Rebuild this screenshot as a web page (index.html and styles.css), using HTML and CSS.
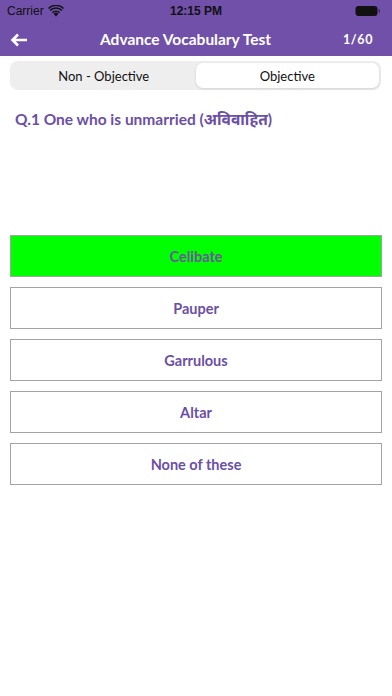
FILE: index.html
```html
<!DOCTYPE html>
<html>
<head>
<meta charset="utf-8">
<link rel="stylesheet" href="styles.css">
</head>
<body>
<div class="app">
  <header class="top">
    <div class="status">
      <div class="status-left">
        <span class="carrier">Carrier</span>
        <svg class="wifi" width="16" height="12" viewBox="0 0 16 12">
          <path d="M8 11.5 L5.6 8.8 A3.4 3.4 0 0 1 10.4 8.8 Z" fill="#111"/>
          <path d="M3.9 7.1 A5.8 5.8 0 0 1 12.1 7.1 L11 8.2 A4.3 4.3 0 0 0 5 8.2 Z" fill="#111"/>
          <path d="M1.6 4.8 A9 9 0 0 1 14.4 4.8 L13.3 5.9 A7.5 7.5 0 0 0 2.7 5.9 Z" fill="#111"/>
          <path d="M0 3 A11.3 11.3 0 0 1 16 3 L15 4 A9.9 9.9 0 0 0 1 4 Z" fill="#111"/>
        </svg>
      </div>
      <span class="time">12:15 PM</span>
      <div class="status-right">
        <svg width="26" height="12" viewBox="0 0 26 12">
          <rect x="0.5" y="1" width="22" height="10" rx="3" fill="#111"/>
          <rect x="23.5" y="4" width="1.5" height="4" rx="0.7" fill="#111" opacity="0.5"/>
        </svg>
      </div>
    </div>
    <div class="nav">
      <svg class="back" width="18" height="14" viewBox="0 0 18 14">
        <path d="M17 7 H3 M8 1.5 L2.5 7 L8 12.5" stroke="#fff" stroke-width="2.6" fill="none"/>
      </svg>
      <h1 class="title">Advance Vocabulary Test</h1>
      <span class="count">1/60</span>
    </div>
  </header>

  <div class="segment">
    <div class="seg-item">Non - Objective</div>
    <div class="seg-item active">Objective</div>
  </div>

  <p class="question">Q.1 One who is unmarried (अविवाहित)</p>

  <div class="options">
    <div class="option correct">Celibate</div>
    <div class="option">Pauper</div>
    <div class="option">Garrulous</div>
    <div class="option">Altar</div>
    <div class="option">None of these</div>
  </div>
</div>
</body>
</html>
```

FILE: styles.css
```css
* { box-sizing: border-box; }
html, body { margin: 0; padding: 0; background: #fff; }
body {
  width: 392px;
  height: 696px;
  overflow: hidden;
  font-family: Lato, "Noto Sans", sans-serif;
}
.top {
  background: #7050a9;
  height: 56px;
  display: flex;
  flex-direction: column;
}
.status {
  height: 22px;
  display: flex;
  align-items: center;
  justify-content: space-between;
  padding: 0 7px 0 7px;
  font-family: "Liberation Sans", Arial, sans-serif;
  color: #111;
}
.status-left { display: flex; align-items: center; gap: 4px; width: 80px; }
.carrier { font-size: 12px; }
.wifi { margin-top: -1px; }
.time { font-size: 12px; font-weight: bold; }
.status-right { width: 80px; display: flex; justify-content: flex-end; padding-right: 4px; }
.nav {
  flex: 1;
  display: flex;
  align-items: center;
  padding: 0 19px 0 10px;
  color: #fff;
}
.back { flex: none; margin-top: 2px; }
.title {
  flex: 1;
  margin: 0;
  text-align: center;
  font-size: 15.5px;
  font-weight: bold;
  padding-left: 0;
  font-family: Lato, sans-serif;
}
.count { font-size: 12.5px; font-weight: bold; letter-spacing: 0.6px; font-family: Lato, sans-serif; }

.segment {
  margin: 5px 11px 0 10px;
  height: 29px;
  background: #eeeeef;
  border-radius: 8px;
  display: flex;
  padding: 2px;
}
.seg-item {
  flex: 1;
  display: flex;
  align-items: center;
  justify-content: center;
  font-size: 13px;
  color: #111;
  font-family: Lato, sans-serif;
}
.seg-item.active {
  background: #fff;
  border-radius: 7px;
  box-shadow: 0 1px 3px rgba(0,0,0,0.12);
}
.question {
  margin: 18px 0 0 15px;
  color: #6b4fa6;
  font-size: 15.5px;
  font-weight: bold;
  font-family: Lato, "Noto Sans", sans-serif;
}
.options {
  margin: 105px 10px 0 10px;
  display: flex;
  flex-direction: column;
  gap: 10px;
}
.option {
  height: 42px;
  border: 1.5px solid #a3a3a3;
  display: flex;
  align-items: center;
  justify-content: center;
  color: #6b4fa6;
  font-size: 14.5px;
  font-weight: bold;
}
.option.correct {
  background: #00ff00;
  color: #6a5a9a;
}
```
